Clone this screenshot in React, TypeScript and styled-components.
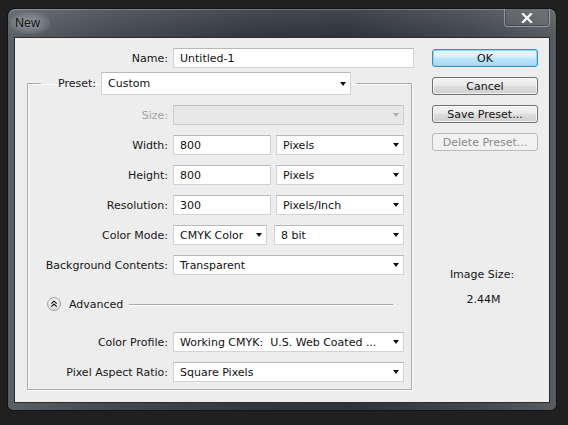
import React from "react";
import styled, { createGlobalStyle, css } from "styled-components";

const GlobalStyle = createGlobalStyle`
  html, body { margin: 0; padding: 0; background: #1f1f1f; }
  body { font-family: "DejaVu Sans", Tahoma, sans-serif; font-size: 11px; }
  #root { width: 568px; height: 425px; }
`;

const Screen = styled.div`
  box-sizing: border-box;
  width: 568px;
  height: 425px;
  padding: 9px 0 0 8px;
  background: #202020;
`;

const Window = styled.div`
  box-sizing: border-box;
  width: 548px;
  height: 401px;
  padding: 0 6px 7px 6px;
  display: flex;
  flex-direction: column;
  border-radius: 7px 7px 5px 5px;
  background:
    linear-gradient(180deg, rgba(255,255,255,0.10) 0%, rgba(255,255,255,0) 28px),
    linear-gradient(90deg, #5b6065 0%, #454a50 18%, #32373d 45%, #2e3339 62%, #42474d 85%, #575c61 100%);
  box-shadow: 0 0 0 1px #121416, inset 0 1px 0 rgba(255,255,255,0.25);
`;

const TitleBar = styled.div`
  height: 28px;
  display: flex;
  justify-content: space-between;
  align-items: flex-start;
`;

const TitleGlow = styled.div`
  margin-top: 3px;
  margin-left: -4px;
  padding: 4px 10px 4px 5px;
  border-radius: 8px;
  background: radial-gradient(ellipse at center, rgba(200,205,210,0.45) 0%, rgba(200,205,210,0.2) 55%, rgba(200,205,210,0) 80%);
`;

const Title = styled.div`
  font-family: "Liberation Sans", Arial, sans-serif;
  font-size: 12.5px;
  line-height: 14px;
  color: #101010;
  text-shadow: 0 0 4px rgba(255,255,255,0.25);
`;

const CloseButton = styled.div`
  box-sizing: border-box;
  width: 46px;
  height: 18px;
  display: flex;
  align-items: center;
  justify-content: center;
  border: 1px solid rgba(190,196,202,0.55);
  border-top: none;
  border-radius: 0 0 4px 4px;
  background: rgba(255,255,255,0.06);
  box-shadow: inset 0 0 0 1px rgba(0,0,0,0.25);
`;

const Client = styled.div`
  box-sizing: border-box;
  flex: 1;
  display: flex;
  background: #ededed;
  border: 1px solid #2a2e33;
  color: #111;
`;

const LeftColumn = styled.div`
  width: 400px;
  display: flex;
  flex-direction: column;
`;

const RightColumn = styled.div`
  width: 106px;
  margin-left: 17px;
  display: flex;
  flex-direction: column;
`;

const Row = styled.div<{ $top?: number }>`
  display: flex;
  align-items: center;
  gap: 5px;
  height: 20px;
  margin-top: ${(p) => p.$top ?? 10}px;
`;

const Label = styled.div<{ $w: number; $disabled?: boolean }>`
  width: ${(p) => p.$w}px;
  text-align: right;
  white-space: nowrap;
  color: ${(p) => (p.$disabled ? "#a3a3a3" : "#161616")};
`;

const Field = styled.div<{ $w: number; $h?: number; $disabled?: boolean; $arrow?: boolean; $gapLeft?: number }>`
  box-sizing: border-box;
  position: relative;
  width: ${(p) => p.$w}px;
  height: ${(p) => p.$h ?? 20}px;
  margin-left: ${(p) => p.$gapLeft ?? 0}px;
  display: flex;
  align-items: center;
  padding: 0 ${(p) => (p.$arrow ? 16 : 6)}px 0 6px;
  background: ${(p) => (p.$disabled ? "#e8e8e8" : "#ffffff")};
  border: 1px solid ${(p) => (p.$disabled ? "#cdcdcd" : "#d2d2d2")};
  border-top-color: ${(p) => (p.$disabled ? "#c2c2c2" : "#b9b9b9")};
  color: #111;
  white-space: pre;
  overflow: hidden;
  ${(p) =>
    p.$arrow &&
    css`
      &::after {
        content: "";
        position: absolute;
        right: 4px;
        top: 50%;
        margin-top: -2px;
        border-left: 3.5px solid transparent;
        border-right: 3.5px solid transparent;
        border-top: 4px solid ${p.$disabled ? "#b0b0b0" : "#111"};
      }
    `}
`;

const Group = styled.fieldset`
  box-sizing: border-box;
  margin: 4px 0 0 12px;
  padding: 0 0 7px 0;
  width: 385px;
  min-width: 0;
  border: 1px solid #a9a9a9;
  box-shadow: inset 1px 1px 0 #ffffff, 1px 1px 0 #ffffff;
`;

const Legend = styled.legend`
  margin-left: 13px;
  padding: 0 6px 0 0;
  display: flex;
  align-items: center;
  gap: 5px;
  height: 23px;
`;

const AdvancedRow = styled.div`
  display: flex;
  align-items: center;
  height: 16px;
  margin-top: 21px;
  margin-left: 19px;
  margin-right: 18px;
`;

const AdvancedText = styled.div`
  margin-left: 8px;
  color: #161616;
`;

const Rule = styled.div`
  flex: 1;
  margin-left: 6px;
  height: 1px;
  background: #a9a9a9;
  box-shadow: 0 1px 0 #ffffff;
`;

const Button = styled.div<{ $variant?: "default" | "normal" | "disabled" }>`
  box-sizing: border-box;
  height: 18px;
  display: flex;
  align-items: center;
  justify-content: center;
  border-radius: 3px;
  white-space: nowrap;
  ${(p) =>
    p.$variant === "default"
      ? css`
          border: 1px solid #3c8dc4;
          background: linear-gradient(180deg, #eaf6fd 0%, #d9f0fc 45%, #bee6fd 50%, #a7d9f5 100%);
          box-shadow: inset 0 0 0 1px #8fd6f7;
          color: #111;
        `
      : p.$variant === "disabled"
      ? css`
          border: 1px solid #b7bbbe;
          background: #f2f2f2;
          color: #8a8a8a;
        `
      : css`
          border: 1px solid #707070;
          background: linear-gradient(180deg, #f2f2f2 0%, #ebebeb 45%, #dddddd 50%, #cfcfcf 100%);
          box-shadow: inset 0 0 0 1px rgba(255,255,255,0.7);
          color: #111;
        `}
`;

const ButtonStack = styled.div`
  margin-top: 11px;
  display: flex;
  flex-direction: column;
  gap: 10px;
`;

const SizeTitle = styled.div`
  margin-top: 117px;
  line-height: 14px;
  text-align: center;
  padding-right: 6px;
  color: #161616;
`;

const SizeValue = styled.div`
  margin-top: 11px;
  line-height: 14px;
  text-align: center;
  padding-right: 3px;
  color: #161616;
`;

const CloseIcon = () => (
  <svg width="12" height="10" viewBox="0 0 12 10">
    <path d="M2 1 L10 9 M10 1 L2 9" stroke="#ffffff" strokeWidth="2.2" strokeLinecap="square" />
  </svg>
);

const CollapseIcon = () => (
  <svg width="14" height="14" viewBox="0 0 14 14">
    <defs>
      <radialGradient id="cg" cx="50%" cy="35%" r="65%">
        <stop offset="0%" stopColor="#ffffff" />
        <stop offset="100%" stopColor="#d9d9d9" />
      </radialGradient>
    </defs>
    <circle cx="7" cy="7" r="6.5" fill="url(#cg)" stroke="#a2a2a2" />
    <path d="M4.3 6.6 L7 4 L9.7 6.6 M4.3 9.6 L7 7 L9.7 9.6" fill="none" stroke="#111" strokeWidth="1.2" />
  </svg>
);

export default function App() {
  return (
    <>
      <GlobalStyle />
      <Screen>
        <Window>
          <TitleBar>
            <TitleGlow>
              <Title>New</Title>
            </TitleGlow>
            <CloseButton>
              <CloseIcon />
            </CloseButton>
          </TitleBar>
          <Client>
            <LeftColumn>
              <Row $top={10}>
                <Label $w={153}>Name:</Label>
                <Field $w={241}>Untitled-1</Field>
              </Row>
              <Group>
                <Legend>
                  <Label $w={55}>Preset:</Label>
                  <Field $w={250} $h={23} $arrow>Custom</Field>
                </Legend>
                <Row $top={10}>
                  <Label $w={140} $disabled>Size:</Label>
                  <Field $w={231} $disabled $arrow></Field>
                </Row>
                <Row>
                  <Label $w={140}>Width:</Label>
                  <Field $w={98}>800</Field>
                  <Field $w={128} $arrow>Pixels</Field>
                </Row>
                <Row>
                  <Label $w={140}>Height:</Label>
                  <Field $w={98}>800</Field>
                  <Field $w={128} $arrow>Pixels</Field>
                </Row>
                <Row>
                  <Label $w={140}>Resolution:</Label>
                  <Field $w={98}>300</Field>
                  <Field $w={128} $arrow>Pixels/Inch</Field>
                </Row>
                <Row>
                  <Label $w={140}>Color Mode:</Label>
                  <Field $w={94} $arrow>CMYK Color</Field>
                  <Field $w={130} $arrow $gapLeft={2}>8 bit</Field>
                </Row>
                <Row>
                  <Label $w={140}>Background Contents:</Label>
                  <Field $w={231} $arrow>Transparent</Field>
                </Row>
                <AdvancedRow>
                  <CollapseIcon />
                  <AdvancedText>Advanced</AdvancedText>
                  <Rule />
                </AdvancedRow>
                <Row $top={20}>
                  <Label $w={140}>Color Profile:</Label>
                  <Field $w={231} $arrow>{"Working CMYK:  U.S. Web Coated ..."}</Field>
                </Row>
                <Row>
                  <Label $w={140}>Pixel Aspect Ratio:</Label>
                  <Field $w={231} $arrow>Square Pixels</Field>
                </Row>
              </Group>
            </LeftColumn>
            <RightColumn>
              <ButtonStack>
                <Button $variant="default">OK</Button>
                <Button>Cancel</Button>
                <Button>Save Preset...</Button>
                <Button $variant="disabled">Delete Preset...</Button>
              </ButtonStack>
              <SizeTitle>Image Size:</SizeTitle>
              <SizeValue>2.44M</SizeValue>
            </RightColumn>
          </Client>
        </Window>
      </Screen>
    </>
  );
}
